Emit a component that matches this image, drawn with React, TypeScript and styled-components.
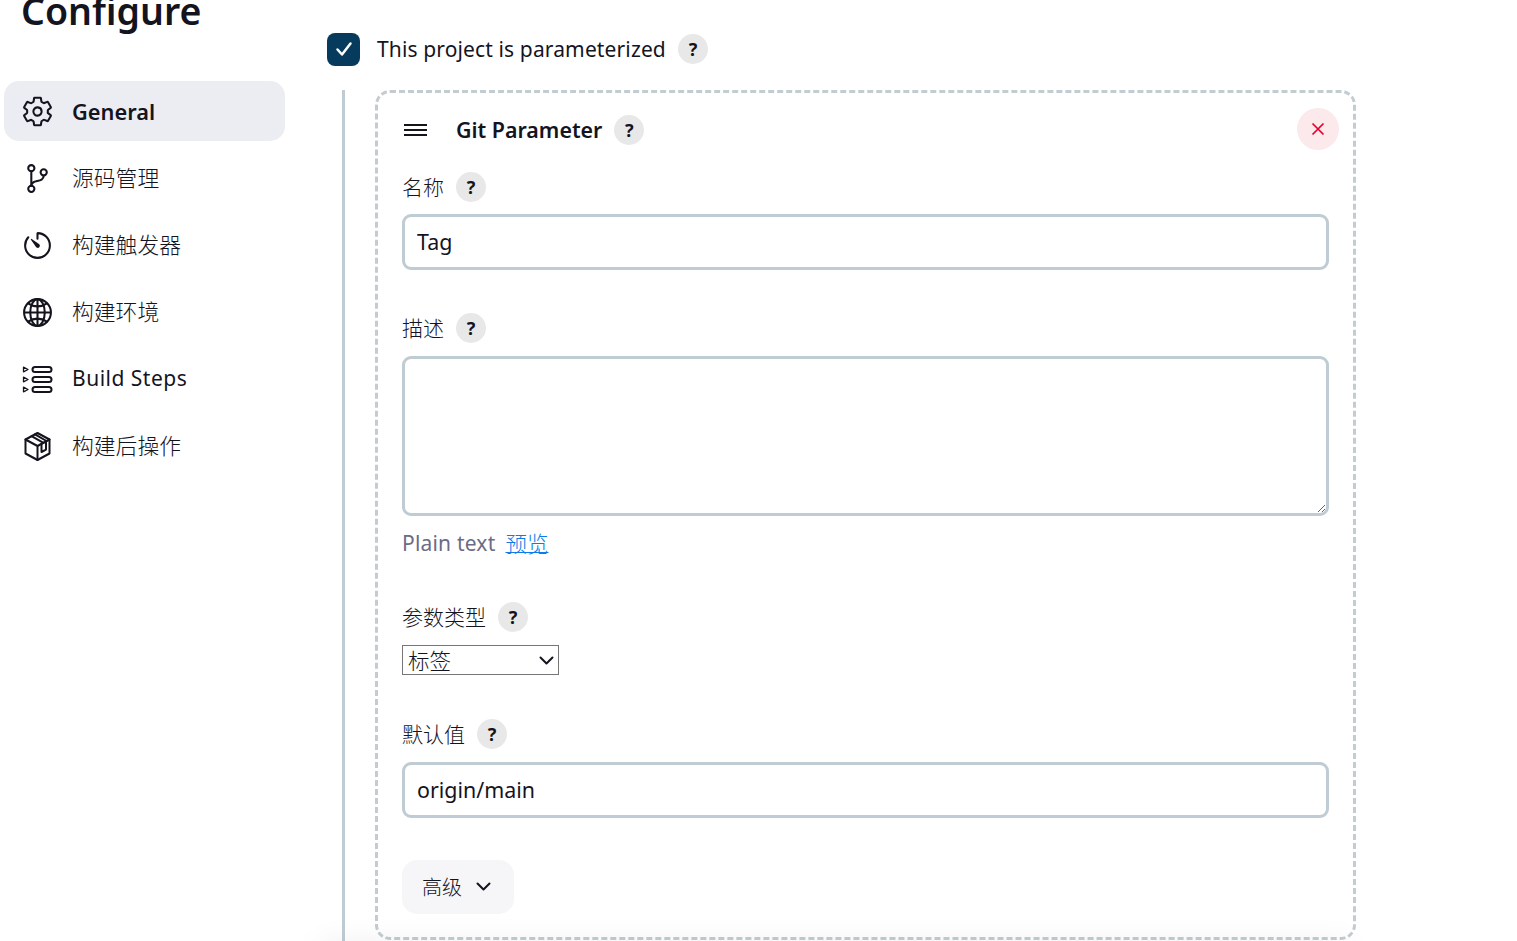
import * as React from "react";
import styled, { createGlobalStyle } from "styled-components";
import {
  IoSettingsOutline,
  IoGitBranchOutline,
  IoTimerOutline,
  IoGlobeOutline,
} from "react-icons/io5";

const fontStack = `"Noto Sans", "Noto Sans CJK SC", sans-serif`;

const GlobalStyle = createGlobalStyle`
  html, body {
    margin: 0;
    padding: 0;
    background: #fff;
    height: 100%;
    overflow: hidden;
  }
  body {
    font-family: ${fontStack};
    color: #14141f;
  }
  * {
    box-sizing: border-box;
  }
`;

const Page = styled.div`
  position: relative;
  display: flex;
  width: 1517px;
  height: 941px;
  overflow: hidden;
`;

const Sidebar = styled.aside`
  flex: 0 0 327px;
  padding-left: 4px;
`;

/* page is scrolled a little, the title gets cut at the top */
const Title = styled.h1`
  margin: -14px 0 0 17px;
  height: 95px;
  font-size: 37.5px;
  line-height: 50px;
  font-weight: 600;
  color: #14141f;
`;

const Nav = styled.nav`
  display: flex;
  flex-direction: column;
  gap: 7px;
  width: 281px;
`;

const NavItem = styled.div<{ $active?: boolean; $latin?: boolean }>`
  --lift: ${(p) => (p.$active ? "0px" : p.$latin ? "2px" : "4px")};
  display: flex;
  align-items: center;
  gap: 18px;
  height: 60px;
  padding: 0 0 var(--lift) 17px;
  border-radius: 15px;
  font-size: ${(p) => (p.$latin ? "21px" : "21.8px")};
  letter-spacing: ${(p) => (p.$latin ? "0.5px" : "0")};
  font-weight: ${(p) => (p.$active ? 600 : p.$latin ? 400 : 300)};
  color: #14141f;
  background: ${(p) => (p.$active ? "#ecedf2" : "transparent")};

  svg {
    flex: 0 0 33px;
    width: 33px;
    height: 33px;
    margin-top: var(--lift);
    color: #14141f;
  }
`;

const Main = styled.main`
  flex: 1;
  padding-top: 33px;
`;

const CheckRow = styled.div`
  display: flex;
  align-items: center;
  height: 33px;
  padding-bottom: 1px;
  font-size: 21px;
  letter-spacing: 0.13px;
  font-weight: 400;
`;

const CheckBox = styled.span`
  display: flex;
  align-items: center;
  justify-content: center;
  width: 33px;
  height: 33px;
  margin-right: 17px;
  border-radius: 8px;
  background: #063b5e;
  color: #fff;

  svg {
    width: 20px;
    height: 20px;
  }
`;

const Help = styled.span`
  display: inline-flex;
  align-items: center;
  justify-content: center;
  flex: 0 0 30px;
  width: 30px;
  height: 30px;
  margin-left: 12px;
  border-radius: 50%;
  background: #e8e8e9;
  color: #14141f;
  font-size: 18px;
  font-weight: 700;
  line-height: 1;
  letter-spacing: 0;
`;

const Nested = styled.div`
  margin: 24px 0 0 15px;
  padding-left: 30px;
  border-left: 3px solid #c0ccd3;
  height: 900px;
`;

const Card = styled.section`
  position: relative;
  width: 981px;
  height: 850px;
  padding: 0 24px;
  border: 3px dashed #c3ccd1;
  border-radius: 15px;
`;

const CardHeader = styled.div`
  display: flex;
  align-items: center;
  height: 33px;
  margin-top: 20px;
  font-size: 21.4px;
  font-weight: 600;
`;

const Grip = styled.svg`
  width: 25px;
  height: 14px;
  margin: 0 28px 0 1px;
`;

const Close = styled.button`
  position: absolute;
  top: 15px;
  right: 14px;
  display: flex;
  align-items: center;
  justify-content: center;
  width: 42px;
  height: 42px;
  padding: 0;
  border: none;
  border-radius: 50%;
  background: #fbe9ec;
  color: #e6002e;

  svg {
    width: 14px;
    height: 14px;
  }
`;

const Label = styled.div<{ $top: number }>`
  display: flex;
  align-items: center;
  height: 30px;
  margin-top: ${(p) => p.$top}px;
  padding-bottom: 2px;
  font-size: 21px;
  font-weight: 300;
  color: #14141f;

  ${Help} {
    margin-bottom: -2px;
  }
`;

const TextInput = styled.input<{ $top: number }>`
  display: block;
  width: 927px;
  height: 56px;
  margin-top: ${(p) => p.$top}px;
  padding: 0 12px 2px;
  border: 3px solid #c0ccd3;
  border-radius: 9px;
  outline: none;
  background: #fff;
  font-family: ${fontStack};
  font-size: 21.4px;
  font-weight: 400;
  color: #14141f;
`;

const TextArea = styled.textarea`
  display: block;
  width: 927px;
  height: 160px;
  margin-top: 13px;
  padding: 13px;
  border: 3px solid #c0ccd3;
  border-radius: 9px;
  outline: none;
  resize: vertical;
  background: #fff;
  font-family: ${fontStack};
  font-size: 21px;
`;

const PreviewRow = styled.div`
  display: flex;
  align-items: center;
  gap: 10px;
  height: 30px;
  margin-top: 12px;
  padding-bottom: 1px;
  font-size: 21px;
  letter-spacing: 0.2px;
  font-weight: 400;
  color: #6d6b85;
`;

const PreviewLink = styled.a`
  font-size: 21.5px;
  font-weight: 300;
  letter-spacing: 0;
  color: #0b7ce8;
  text-decoration: underline;
  text-underline-offset: 0;
  text-decoration-thickness: 1px;
`;

const SelectWrap = styled.div`
  position: relative;
  width: 157px;
  height: 30px;
  margin-top: 13px;

  svg {
    position: absolute;
    top: 11px;
    right: 5px;
    width: 15px;
    height: 9px;
    pointer-events: none;
  }
`;

const TypeSelect = styled.select`
  display: block;
  width: 100%;
  height: 100%;
  padding: 0 5px 2px;
  appearance: none;
  border: 1px solid #767676;
  border-radius: 0;
  background: #fff;
  font-family: ${fontStack};
  font-size: 21.5px;
  font-weight: 300;
  color: #14141f;
`;

const AdvancedButton = styled.button`
  display: flex;
  align-items: center;
  gap: 14px;
  width: 112px;
  height: 54px;
  margin-top: 42px;
  padding: 0 0 2px 20px;
  border: none;
  border-radius: 15px;
  background: #f6f6f8;
  font-family: ${fontStack};
  font-size: 20px;
  font-weight: 300;
  color: #14141f;

  svg {
    width: 15px;
    height: 9px;
  }
`;

/* faint shadow of the sticky bar below the fold */
const BottomFade = styled.div`
  position: absolute;
  left: 320px;
  right: 170px;
  bottom: -30px;
  height: 30px;
  box-shadow: 0 0 30px rgba(20, 20, 31, 0.06);
  pointer-events: none;
`;

const Chevron = () => (
  <svg viewBox="0 0 15 9" fill="none" stroke="currentColor" strokeWidth="2" strokeLinecap="round" strokeLinejoin="round">
    <path d="M1.5 1.5 7.5 7.5l6-6" />
  </svg>
);

const CubeIcon = () => (
  <svg viewBox="0 0 33 33" fill="none" stroke="currentColor" strokeWidth="2" strokeLinejoin="round" strokeLinecap="round">
    <path d="M16.5 3 28.5 9.5v14L16.5 30 4.5 23.5v-14z" />
    <path d="M4.5 9.5 16.5 16l12-6.5M16.5 16v14" />
    <path d="M10.5 6.2 22.5 12.8M14 4.4 25.5 11" />
    <path d="M20.5 14v8l4.5-2.4v-8" />
  </svg>
);

const StepsIcon = () => (
  <svg viewBox="0 0 33 33" fill="none" stroke="currentColor" strokeWidth="2" strokeLinejoin="round">
    <rect x="11.5" y="4" width="19" height="5" rx="2.5" />
    <rect x="11.5" y="14" width="19" height="5" rx="2.5" />
    <rect x="11.5" y="24" width="19" height="5" rx="2.5" />
    <path strokeWidth="1.3" d="M2.5 4.2 7 6.5 2.5 8.8zM2.5 14.2 7 16.5 2.5 18.8zM2.5 24.2 7 26.5 2.5 28.8z" />
  </svg>
);

const items = [
  { label: "General", icon: <IoSettingsOutline />, active: true },
  { label: "源码管理", icon: <IoGitBranchOutline /> },
  { label: "构建触发器", icon: <IoTimerOutline /> },
  { label: "构建环境", icon: <IoGlobeOutline /> },
  { label: "Build Steps", icon: <StepsIcon />, latin: true },
  { label: "构建后操作", icon: <CubeIcon /> },
];

export default function App() {
  return (
    <Page>
      <GlobalStyle />
      <Sidebar>
        <Title>Configure</Title>
        <Nav>
          {items.map((item) => (
            <NavItem key={item.label} $active={item.active} $latin={item.latin}>
              {item.icon}
              {item.label}
            </NavItem>
          ))}
        </Nav>
      </Sidebar>
      <Main>
        <CheckRow>
          <CheckBox>
            <svg viewBox="0 0 20 20" fill="none" stroke="currentColor" strokeWidth="2.5" strokeLinecap="round" strokeLinejoin="round">
              <path d="M3.5 10.5 8 15.5l8.5-11" />
            </svg>
          </CheckBox>
          This project is parameterized
          <Help>?</Help>
        </CheckRow>
        <Nested>
          <Card>
            <CardHeader>
              <Grip viewBox="0 0 25 14" stroke="currentColor" strokeWidth="2">
                <path d="M1 2h23M1 7h23M1 12h23" />
              </Grip>
              Git Parameter
              <Help>?</Help>
            </CardHeader>
            <Close>
              <svg viewBox="0 0 14 14" fill="none" stroke="currentColor" strokeWidth="1.7">
                <path d="M1.5 1.5l11 11M12.5 1.5l-11 11" />
              </svg>
            </Close>
            <Label $top={26}>
              名称
              <Help>?</Help>
            </Label>
            <TextInput $top={12} defaultValue="Tag" />
            <Label $top={43}>
              描述
              <Help>?</Help>
            </Label>
            <TextArea />
            <PreviewRow>
              Plain text
              <PreviewLink href="#">预览</PreviewLink>
            </PreviewRow>
            <Label $top={44}>
              参数类型
              <Help>?</Help>
            </Label>
            <SelectWrap>
              <TypeSelect defaultValue="tag">
                <option value="tag">标签</option>
              </TypeSelect>
              <Chevron />
            </SelectWrap>
            <Label $top={44}>
              默认值
              <Help>?</Help>
            </Label>
            <TextInput $top={13} defaultValue="origin/main" />
            <AdvancedButton>
              高级
              <Chevron />
            </AdvancedButton>
          </Card>
        </Nested>
      </Main>
      <BottomFade />
    </Page>
  );
}
